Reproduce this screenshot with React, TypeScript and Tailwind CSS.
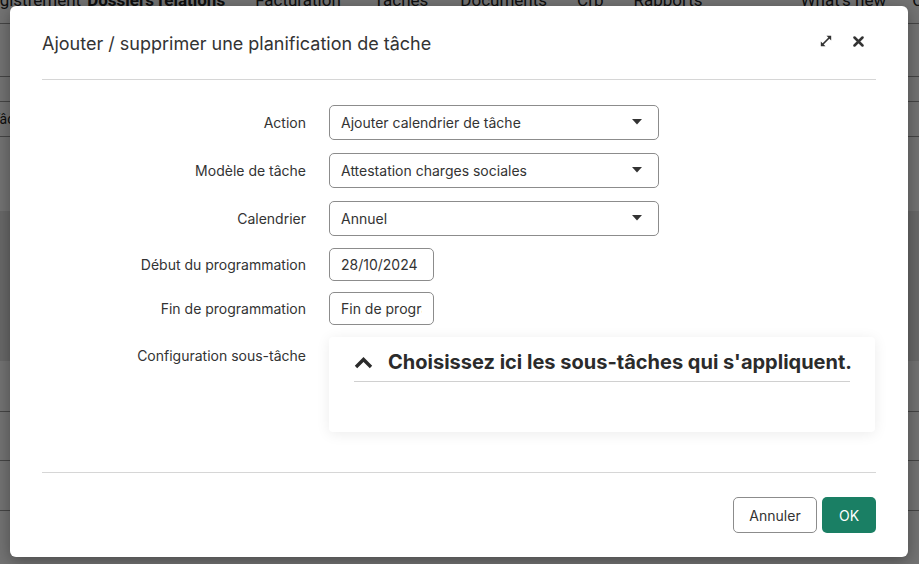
import React from "react";

const Caret = () => (
  <svg width="10" height="6" viewBox="0 0 10 6" className="shrink-0">
    <path d="M0 0 L10 0 L5 5.5 Z" fill="#333" />
  </svg>
);

function SelectBox({ value }: { value: string }) {
  return (
    <div className="w-[330px] h-[35px] border border-[#8c8c8c] rounded-[5px] flex items-center justify-between pl-[11px] pr-[16px] text-[14px] text-[#333]">
      <span>{value}</span>
      <Caret />
    </div>
  );
}

function InputBox({ value }: { value: string }) {
  return (
    <input
      readOnly
      value={value}
      className="w-[105px] h-[33px] border border-[#8c8c8c] rounded-[5px] px-[11px] text-[14px] text-[#333] bg-white outline-none"
      style={{ fontFamily: "Inter, 'Noto Sans', sans-serif" }}
    />
  );
}

function Row({ label, children, h }: { label: string; children: React.ReactNode; h: string }) {
  return (
    <div className={`flex items-center ${h}`}>
      <div className="w-[287px] text-right text-[14px] text-[#333] pr-[23px] shrink-0">{label}</div>
      {children}
    </div>
  );
}

export default function App() {
  return (
    <div
      className="relative w-[919px] h-[564px] overflow-hidden bg-white"
      style={{ fontFamily: "Inter, 'Noto Sans', sans-serif" }}
    >
      {/* background page */}
      <div className="absolute inset-0 text-[#222]" style={{ fontFamily: "Roboto, sans-serif" }}>
        <div className="h-[36px] border-b border-[#999]">
          <div className="flex items-start text-[17px] -mt-[12px] whitespace-nowrap">
            <span className="ml-[-34px]">Enregistrement</span>
            <span className="ml-[6px] font-bold">Dossiers relations</span>
            <span className="ml-[30px]">Facturation</span>
            <span className="ml-[33px]">Tâches</span>
            <span className="ml-[32px]">Documents</span>
            <span className="ml-[30px]">Crb</span>
            <span className="ml-[30px]">Rapports</span>
            <span className="ml-[98px]">What's new</span>
            <span className="ml-[2px] mt-[4px] w-[14px] h-[14px] rounded-full bg-[#f0a020]" />
            <span className="ml-[24px]">C</span>
          </div>
        </div>
        <div className="h-[53px] border-b border-[#999]" />
        <div className="h-[25px] border-b border-[#999]" />
        <div className="h-[35px] border-b border-[#999] flex items-center text-[14px]">
          <span className="ml-[-8px]">Tâche</span>
        </div>
        <div className="h-[74px]" />
        <div className="h-[150px] bg-[#e6e6e6]" />
        <div className="h-[51px] border-b border-[#999]" />
        <div className="h-[49px] border-b border-[#999]" />
        <div className="h-[50px] border-b border-[#999]" />
        <div className="pl-[48px] pt-[20px] text-[15px]">9000 Gent</div>
      </div>
      <div className="absolute inset-0 bg-black/55" />

      {/* modal */}
      <div className="absolute left-[10px] top-[6px] w-[898px] h-[551px] bg-white rounded-[6px] shadow-[0_4px_16px_rgba(0,0,0,0.35)] px-[32px] flex flex-col">
        <div className="h-[74px] border-b border-[#d6d6d6] flex items-center justify-between">
          <div className="text-[18px] text-[#333] pt-[1px]">
            Ajouter / supprimer une planification de tâche
          </div>
          <div className="flex items-center gap-[21px] pr-[12px] pb-[3px]">
            <svg width="12" height="12" viewBox="0 0 12 12">
              <path d="M2 10 L10 2" stroke="#333" strokeWidth="1.7" />
              <path d="M6.5 0.8 L11.2 0.8 L11.2 5.5 Z" fill="#333" />
              <path d="M0.8 6.5 L0.8 11.2 L5.5 11.2 Z" fill="#333" />
            </svg>
            <svg width="11" height="11" viewBox="0 0 11 11">
              <path d="M1.5 1.5 L9.5 9.5 M9.5 1.5 L1.5 9.5" stroke="#333" strokeWidth="2.5" strokeLinecap="round" />
            </svg>
          </div>
        </div>

        <div className="flex-1 flex flex-col pt-[18px]">
          <Row label="Action" h="h-[48px]">
            <SelectBox value="Ajouter calendrier de tâche" />
          </Row>
          <Row label="Modèle de tâche" h="h-[48px]">
            <SelectBox value="Attestation charges sociales" />
          </Row>
          <Row label="Calendrier" h="h-[48px]">
            <SelectBox value="Annuel" />
          </Row>
          <Row label="Début du programmation" h="h-[44px]">
            <InputBox value="28/10/2024" />
          </Row>
          <Row label="Fin de programmation" h="h-[44px]">
            <InputBox value="Fin de programmation" />
          </Row>
          <div className="flex items-start mt-[7px]">
            <div className="w-[287px] text-right text-[14px] text-[#333] pr-[23px] shrink-0 pt-[8px]">
              Configuration sous-tâche
            </div>
            <div className="w-[546px] h-[95px] bg-white rounded-[4px] shadow-[0_2px_14px_rgba(0,0,0,0.08)] px-[25px] pt-[10px]">
              <div className="h-[35px] border-b border-[#d0d0d0] flex items-center gap-[15px]">
                <svg width="19" height="13" viewBox="0 0 19 13" className="mb-[3px] shrink-0">
                  <path d="M2 11 L9.5 3.5 L17 11" stroke="#2b2b2b" strokeWidth="3.4" fill="none" strokeLinejoin="miter" />
                </svg>
                <span className="text-[20px] font-bold text-[#2b2b2b] pb-[4px] whitespace-nowrap">
                  Choisissez ici les sous-tâches qui s'appliquent.
                </span>
              </div>
            </div>
          </div>
        </div>

        <div className="h-[85px] border-t border-[#d6d6d6] flex items-start justify-end pt-[24px] gap-[5px]">
          <button className="w-[84px] h-[36px] border border-[#8c8c8c] rounded-[5px] text-[14px] text-[#333] bg-white">
            Annuler
          </button>
          <button className="w-[54px] h-[36px] rounded-[5px] text-[14px] text-white bg-[#1a7f64]">
            OK
          </button>
        </div>
      </div>
    </div>
  );
}
